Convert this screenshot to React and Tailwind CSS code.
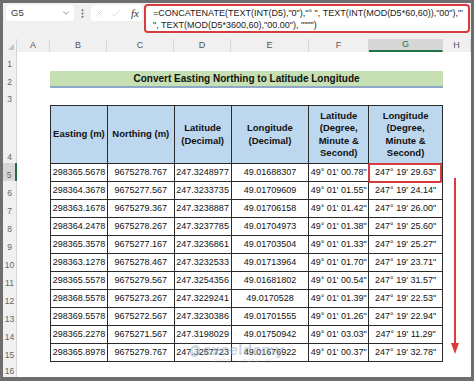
import { ChevronDown, X, Check, EllipsisVertical } from "lucide-react";

const columns = [
  { label: "A", w: "w-[33px]" },
  { label: "B", w: "w-[57px]" },
  { label: "C", w: "w-[67px]" },
  { label: "D", w: "w-[57px]" },
  { label: "E", w: "w-[78px]" },
  { label: "F", w: "w-[60px]" },
  { label: "G", w: "w-[74px]", active: true },
  { label: "H", w: "w-[28px]" },
];

const rowHeads = [
  { n: 1, h: "h-[18px]" },
  { n: 2, h: "h-[18px]" },
  { n: 3, h: "h-[17px]" },
  { n: 4, h: "h-[58px]" },
  { n: 5, h: "h-[18px]", active: true },
  { n: 6, h: "h-[18px]" },
  { n: 7, h: "h-[18px]" },
  { n: 8, h: "h-[18px]" },
  { n: 9, h: "h-[18px]" },
  { n: 10, h: "h-[18px]" },
  { n: 11, h: "h-[18px]" },
  { n: 12, h: "h-[18px]" },
  { n: 13, h: "h-[18px]" },
  { n: 14, h: "h-[18px]" },
  { n: 15, h: "h-[18px]" },
  { n: 16, h: "h-[16px]" },
];

const headers = [
  ["Easting (m)"],
  ["Northing (m)"],
  ["Latitude", "(Decimal)"],
  ["Longitude", "(Decimal)"],
  ["Latitude", "(Degree,", "Minute &", "Second)"],
  ["Longitude", "(Degree,", "Minute &", "Second)"],
];

const data = [
  ["298365.5678", "9675278.767", "247.3248977", "49.01688307", "49° 01' 00.78\"", "247° 19' 29.63\""],
  ["298364.3678", "9675277.567", "247.3233735", "49.01709609", "49° 01' 01.55\"", "247° 19' 24.14\""],
  ["298363.1678", "9675279.367", "247.3238887", "49.01706158", "49° 01' 01.42\"", "247° 19' 26.00\""],
  ["298364.2478", "9675278.267", "247.3237785", "49.01704973", "49° 01' 01.38\"", "247° 19' 25.60\""],
  ["298365.3578", "9675277.167", "247.3236861", "49.01703504", "49° 01' 01.33\"", "247° 19' 25.27\""],
  ["298363.1278", "9675278.467", "247.3232533", "49.01713964", "49° 01' 01.70\"", "247° 19' 23.71\""],
  ["298365.5578", "9675279.567", "247.3254356", "49.01681802", "49° 01' 00.54\"", "247° 19' 31.57\""],
  ["298368.5578", "9675273.267", "247.3229241", "49.0170528", "49° 01' 01.39\"", "247° 19' 22.53\""],
  ["298369.5578", "9675272.567", "247.3230386", "49.01701555", "49° 01' 01.26\"", "247° 19' 22.94\""],
  ["298365.2278", "9675271.567", "247.3198029", "49.01750942", "49° 01' 03.03\"", "247° 19' 11.29\""],
  ["298365.8978", "9675279.767", "247.3257723", "49.01676922", "49° 01' 00.37\"", "247° 19' 32.78\""],
];

const FormulaBar = () => (
  <div className="h-[36px] bg-[#f0f0f0] flex items-start pt-[1px] pl-[3px] pr-[1px] gap-[2px]">
    {/* name box */}
    <div className="shrink-0 mt-[1px] w-[68px] h-[16px] bg-white rounded-[3px] flex items-center justify-between pl-[5px] pr-[3px]">
      <span className="text-[9.5px] text-[#333]">G5</span>
      <ChevronDown size={10} strokeWidth={1.5} className="text-[#555]" />
    </div>
    <div className="shrink-0 mt-[4px] w-[13px] flex justify-center">
      <EllipsisVertical size={11} strokeWidth={2.2} className="text-[#666]" />
    </div>
    {/* cancel / enter / fx */}
    <div className="shrink-0 mt-[1px] w-[51px] h-[16px] bg-white rounded-[3px] flex items-center pl-[3px] gap-[5px]">
      <X size={11} strokeWidth={1.2} className="text-[#c4c4c4]" />
      <Check size={11} strokeWidth={1.2} className="text-[#c4c4c4]" />
      <span className="ml-[5px] font-['Liberation_Serif',serif] italic text-[11px] text-[#333] leading-none">fx</span>
    </div>
    {/* formula */}
    <div className="shrink-0 w-[326px] h-[29px] bg-white border-2 border-[#d83b3e] rounded-[4px] pl-[7px] pt-[1px] text-[9px] leading-[12px] text-[#222] whitespace-nowrap">
      <div>=CONCATENATE(TEXT(INT(D5),"0"),"° ", TEXT(INT(MOD(D5*60,60)),"00"),"'</div>
      <div>", TEXT(MOD(D5*3600,60),"00.00"), """")</div>
    </div>
  </div>
);

const ColumnHeader = () => (
  <div className="h-[13px] flex bg-[#f0f0f0] text-[9px] text-[#555]">
    <div className="w-[14px] relative border-r border-[#d6d6d6]">
      <div className="absolute right-[2px] bottom-[2px] w-0 h-0 border-l-[6px] border-l-transparent border-b-[6px] border-b-[#c3c3c3]" />
    </div>
    {columns.map((c) => (
      <div
        key={c.label}
        className={`${c.w} flex items-center justify-center border-r border-[#d6d6d6] ${
          c.active ? "bg-[#d6d6d6] border-b-2 border-b-[#217346] text-[#217346]" : ""
        }`}
      >
        {c.label}
      </div>
    ))}
  </div>
);

const RowHeaders = () => (
  <div className="w-[14px] flex flex-col bg-[#f0f0f0] text-[8.5px] text-[#666]">
    {rowHeads.map((r) => (
      <div
        key={r.n}
        className={`${r.h} flex items-end justify-center pb-[1px] leading-[10px] ${
          r.active ? "bg-[#d6d6d6] border-r-2 border-[#217346]" : "border-r border-[#d6d6d6]"
        }`}
      >
        {r.n}
      </div>
    ))}
  </div>
);

const colWidths = ["w-[57px]", "w-[67px]", "w-[57px]", "w-[78px]", "w-[60px]", "w-[74px]"];

const DataTable = () => (
  <div className="ml-[33px] flex flex-col w-[393px] border-l border-t border-[#2a2a2a] text-[#111]">
    <div className="flex h-[58px] bg-[#bdd7ee] font-bold text-[9.5px] leading-[12.5px]">
      {headers.map((lines, i) => (
        <div key={i} className={`${colWidths[i]} border-r border-b border-[#2a2a2a] flex flex-col items-center justify-center text-center`}>
          {lines.map((l) => (
            <span key={l}>{l}</span>
          ))}
        </div>
      ))}
    </div>
    {data.map((row, r) => (
      <div key={r} className="flex h-[18px] text-[9px]">
        {row.map((v, i) => (
          <div key={i} className={`${colWidths[i]} relative border-r border-b border-[#2a2a2a] flex items-center justify-center whitespace-nowrap`}>
            {v}
            {r === 0 && i === 5 && (
              <div className="absolute -left-[1px] -top-[1px] right-0 -bottom-[2px] border-2 border-[#d83b3e] rounded-[2px]" />
            )}
          </div>
        ))}
      </div>
    ))}
  </div>
);

const Sheet = () => (
  <div className="flex-1 bg-white relative">
    <div className="h-[18px]" />
    <div className="h-[18px] pt-[1px] pl-[33px]">
      <div className="w-[393px] h-[17px] bg-[#c6e0b4] border-b-2 border-[#8ea9c8] flex items-center justify-center font-bold text-[10px] text-[#111]">
        Convert Easting Northing to Latitude Longitude
      </div>
    </div>
    <div className="h-[17px]" />
    <DataTable />

    {/* red arrow */}
    <div className="absolute left-[434px] top-[126px] h-[176px] w-[8px] flex flex-col items-center">
      <div className="w-[2px] flex-1 bg-[#e0393b]" />
      <div className="w-0 h-0 border-l-[4px] border-r-[4px] border-t-[11px] border-l-transparent border-r-transparent border-t-[#e0393b]" />
    </div>

    {/* watermark */}
    <div className="absolute left-[172px] top-[290px] flex items-start gap-[2px] opacity-50 pointer-events-none">
      <svg width="12" height="14" viewBox="0 0 12 14" className="mt-[2px]">
        <path d="M6 1 C10 1 11 4 11 7 C11 11 8 13 5 13 C2 13 1 10 1 7 C1 4 3 1 6 1 Z" fill="#9fb3cf" />
        <circle cx="6" cy="6.5" r="2.4" fill="#ffffff" />
      </svg>
      <div className="flex flex-col items-center leading-none">
        <span className="text-[15px] font-bold text-[#97abc8] tracking-[0.5px]">exceldemy</span>
        <span className="text-[5px] text-[#a9b6c8] tracking-[1px] mt-[2px]">EXCEL · DATA · BI</span>
      </div>
    </div>
  </div>
);

export default function App() {
  return (
    <div className="w-[474px] h-[381px] bg-[#6e6e6e] pl-[3px] pt-[3px] pr-[3px] pb-[4px] font-['Liberation_Sans',Arial,sans-serif] overflow-hidden">
      <div className="w-full h-full flex flex-col bg-[#f0f0f0] overflow-hidden">
        <FormulaBar />
        <ColumnHeader />
        <div className="flex flex-1">
          <RowHeaders />
          <Sheet />
        </div>
      </div>
    </div>
  );
}
